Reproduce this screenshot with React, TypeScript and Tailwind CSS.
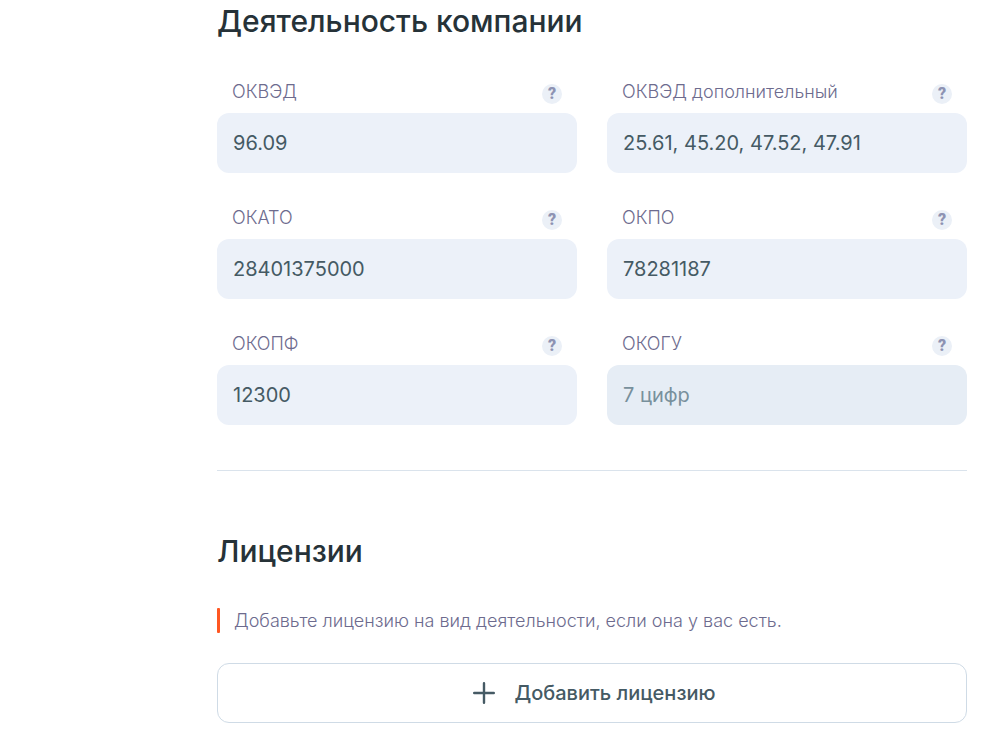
const fields = [
  { id: "okved", label: "ОКВЭД", value: "96.09" },
  { id: "okved-extra", label: "ОКВЭД дополнительный", value: "25.61, 45.20, 47.52, 47.91" },
  { id: "okato", label: "ОКАТО", value: "28401375000" },
  { id: "okpo", label: "ОКПО", value: "78281187" },
  { id: "okopf", label: "ОКОПФ", value: "12300" },
  { id: "okogu", label: "ОКОГУ", value: "", placeholder: "7 цифр" },
];

function Field({ id, label, value, placeholder }: { id: string; label: string; value: string; placeholder?: string }) {
  return (
    <div>
      <div className="flex h-[33px] items-start justify-between px-[15px]">
        <label htmlFor={id} className="text-[18px] leading-6 font-light text-[#6d6b8e]">
          {label}
        </label>
        <button
          type="button"
          aria-label={`Подсказка: ${label}`}
          className="mt-1 flex size-5 items-center justify-center rounded-full bg-[#ebf0f7] font-[Roboto,sans-serif] text-[16px] leading-5 font-black text-[#8e93b3]"
        >
          ?
        </button>
      </div>
      <input
        id={id}
        type="text"
        defaultValue={value}
        placeholder={placeholder}
        className="block h-[60px] w-full rounded-xl bg-[#ecf1f9] px-4 text-[20px] text-[#455a64] outline-none placeholder:text-[#78909c] placeholder-shown:bg-[#e6edf5]"
      />
    </div>
  );
}

export default function App() {
  return (
    <main className="min-h-screen bg-white pr-[33px] pb-7 pl-[217px] font-['Inter',sans-serif]">
      <section className="border-b border-[#dae3ec] pt-[3px] pb-[45px]">
        <h1 className="text-[30px] leading-9 font-[450] text-[#263238]">Деятельность компании</h1>
        <div className="mt-[41px] grid grid-cols-2 gap-x-[30px] gap-y-[33px]">
          {fields.map((f) => (
            <Field key={f.id} {...f} />
          ))}
        </div>
      </section>
      <section className="pt-[62px]">
        <h2 className="text-[30px] leading-9 font-[450] text-[#263238]">Лицензии</h2>
        <div className="mt-[39px] flex gap-[14px]">
          <span className="w-[3px] shrink-0 rounded-[1px] bg-[#ff5722]" />
          <p className="text-[18px] leading-[25px] font-light text-[#6d6b8e]">
            Добавьте лицензию на вид деятельности, если она у вас есть.
          </p>
        </div>
        <button
          type="button"
          className="mt-[30px] flex h-[60px] w-full items-center justify-center gap-4 rounded-xl border border-[#cfdbe6] pl-[2px] text-[20px] font-medium text-[#455a64]"
        >
          <svg className="size-7" viewBox="0 0 28 28" fill="none" stroke="currentColor" strokeWidth="2.4" strokeLinecap="round" aria-hidden="true">
            <path d="M14 4.2v19.6M4.2 14h19.6" />
          </svg>
          Добавить лицензию
        </button>
      </section>
    </main>
  );
}
